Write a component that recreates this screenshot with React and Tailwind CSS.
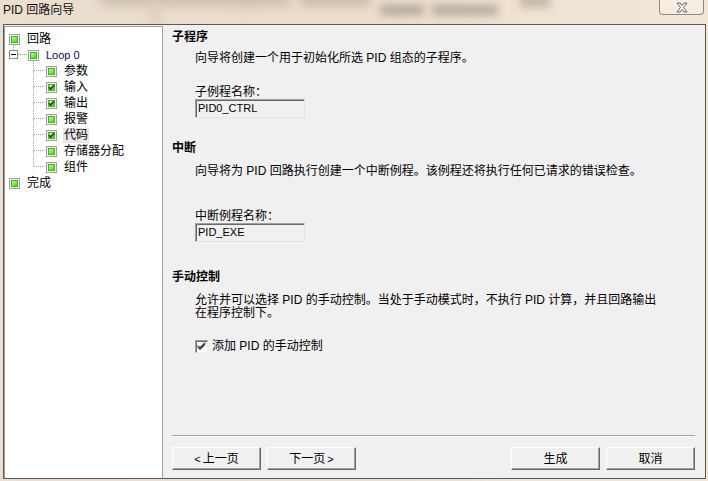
import React from "react";

function NodeIcon({ checked }) {
  return (
    <svg width="11" height="11" viewBox="0 0 11 11" className="block shrink-0">
      <rect x="0.5" y="0.5" width="10" height="10" fill="#fbfbfb" stroke="#a2a2a2" />
      <rect x="2" y="2" width="7" height="7" fill="url(#nodeGrad)" />
      <rect x="2.5" y="2.5" width="6" height="6" fill="none" stroke="#41b820" strokeWidth="1" />
      {checked && (
        <path d="M3 5.2 L4.6 7 L8.2 3.2" fill="none" stroke="#1c4a16" strokeWidth="1.6" />
      )}
    </svg>
  );
}

function TreeRow({ level, checked, children, selected, loop }) {
  const pad = level === 0 ? "pl-[4px]" : level === 1 ? "pl-[23px]" : "pl-[41px]";
  return (
    <div className={`h-[16px] flex items-center gap-[6px] ${pad}`}>
      <NodeIcon checked={checked} />
      <span
        className={`leading-[15px] whitespace-nowrap px-[1px] ${
          selected ? "bg-[#e6e6e6]" : ""
        } ${loop ? "text-[11px] text-[#0c0c5c]" : "text-[12px] text-black"}`}
      >
        {children}
      </span>
    </div>
  );
}

function Tree() {
  const childYs = [2, 3, 4, 5, 6, 7, 8].map((i) => 12 + 16 * i - 0.5);
  return (
    <div className="w-[159px] mt-[1px] shrink-0 bg-white border-t border-l border-r border-[#a0a0a0] relative">
      <svg
        width="60"
        height="160"
        className="absolute left-0 top-0 pointer-events-none"
        shapeRendering="crispEdges"
      >
        <line x1="8.5" y1="18" x2="8.5" y2="23" stroke="#a0a0a0" strokeDasharray="1 1" />
        <rect x="4.5" y="23.5" width="8" height="8" fill="#ffffff" stroke="#8f8f8f" />
        <line x1="6" y1="27.5" x2="11" y2="27.5" stroke="#000000" />
        <line x1="13" y1="27.5" x2="22" y2="27.5" stroke="#a0a0a0" strokeDasharray="1 1" />
        <line x1="28.5" y1="34" x2="28.5" y2="140" stroke="#a0a0a0" strokeDasharray="1 1" />
        {childYs.map((y) => (
          <line key={y} x1="29" y1={y} x2="40" y2={y} stroke="#a0a0a0" strokeDasharray="1 1" />
        ))}
      </svg>
      <div className="pt-[4px] flex flex-col relative">
        <TreeRow level={0}>回路</TreeRow>
        <TreeRow level={1} loop>
          Loop 0
        </TreeRow>
        <TreeRow level={2}>参数</TreeRow>
        <TreeRow level={2} checked>
          输入
        </TreeRow>
        <TreeRow level={2} checked>
          输出
        </TreeRow>
        <TreeRow level={2}>报警</TreeRow>
        <TreeRow level={2} checked selected>
          代码
        </TreeRow>
        <TreeRow level={2}>存储器分配</TreeRow>
        <TreeRow level={2}>组件</TreeRow>
        <TreeRow level={0}>完成</TreeRow>
      </div>
    </div>
  );
}

function ReadOnlyInput({ value }) {
  return (
    <div className="ml-[23px] w-[110px] h-[19px] bg-[#f0f0f0] border border-t-[#a0a0a0] border-l-[#a0a0a0] border-r-[#e3e3e3] border-b-[#e3e3e3] shadow-[inset_1px_1px_0_#696969] flex items-center pl-[2px] text-[11px] leading-[13px] text-black">
      {value}
    </div>
  );
}

function WinButton({ children }) {
  return (
    <div className="w-[89px] h-[23px] bg-[#f0f0f0] border border-t-white border-l-white border-r-[#696969] border-b-[#696969] shadow-[inset_-1px_-1px_0_#a0a0a0] flex items-center justify-center text-[12px] leading-[14px] text-black whitespace-nowrap">
      {children}
    </div>
  );
}

function CheckBox() {
  return (
    <svg width="13" height="13" viewBox="0 0 13 13" className="block shrink-0" shapeRendering="crispEdges">
      <rect x="0" y="0" width="13" height="13" fill="#ffffff" />
      <path d="M0.5 12.5 V0.5 H12.5" fill="none" stroke="#a0a0a0" />
      <path d="M1.5 11.5 V1.5 H11.5" fill="none" stroke="#696969" />
      <path d="M12.5 0.5 V12.5 H0.5" fill="none" stroke="#f0f0f0" />
      <path d="M3 5.5 L5 7.5 L10 2.5 M3 6.5 L5 8.5 L10 3.5 M3 7.5 L5 9.5 L10 4.5" fill="none" stroke="#000000" shapeRendering="auto" strokeWidth="1" />
    </svg>
  );
}

export default function App() {
  return (
    <div className="w-[708px] h-[481px] overflow-hidden flex flex-col bg-[linear-gradient(90deg,#ebdfcf_0%,#e9dcc9_35%,#ecdfcc_60%,#f1e5d5_85%,#f3e7d8_100%)] font-[family-name:'Liberation_Sans','Noto_Sans_CJK_SC',sans-serif] text-black">
      <svg width="0" height="0" className="absolute">
        <defs>
          <linearGradient id="nodeGrad" x1="0" y1="0" x2="1" y2="1">
            <stop offset="0" stopColor="#d4ffb0" />
            <stop offset="0.45" stopColor="#86f04e" />
            <stop offset="1" stopColor="#3cc21c" />
          </linearGradient>
        </defs>
      </svg>

      {/* Title bar */}
      <div className="h-[24px] shrink-0 relative flex items-start justify-between overflow-hidden">
        <div className="absolute left-[100px] top-[-6px] w-[190px] h-[12px] bg-[#c4b8a7] blur-[5px] opacity-80 pointer-events-none" />
        <div className="absolute left-[300px] top-[-6px] w-[70px] h-[12px] bg-[#c0b4a3] blur-[5px] opacity-80 pointer-events-none" />
        <div className="absolute left-[380px] top-[5px] w-[44px] h-[10px] bg-[#a49a8b] blur-[4px] opacity-80 pointer-events-none" />
        <div className="absolute left-[432px] top-[5px] w-[66px] h-[10px] bg-[#a69c8d] blur-[4px] opacity-80 pointer-events-none" />
        <div className="absolute left-[520px] top-[-5px] w-[30px] h-[12px] bg-[#b4a896] blur-[5px] opacity-80 pointer-events-none" />
        <div className="absolute left-[150px] top-[0px] w-[10px] h-[24px] bg-[#dccfbc] blur-[4px] pointer-events-none" />
        <span className="relative pl-[3px] pt-[2px] text-[12px] leading-[16px] text-[#111111] whitespace-nowrap">
          PID 回路向导
        </span>
        <div className="relative mr-[4px] w-[45px] h-[15px] rounded-b-[4px] border border-t-0 border-[#8e8880] bg-[linear-gradient(180deg,rgba(255,255,255,0.35),rgba(255,255,255,0.15))] flex items-center justify-center">
          <svg width="12" height="11" viewBox="0 0 12 11" className="block">
            <path
              d="M1 1 H4 L6 3.5 L8 1 H11 L7.6 5.5 L11 10 H8 L6 7.5 L4 10 H1 L4.4 5.5 Z"
              fill="#ffffff"
              stroke="#5d6270"
              strokeWidth="1"
              strokeLinejoin="round"
            />
          </svg>
        </div>
      </div>

      {/* Window body */}
      <div className="flex-1 min-h-0 ml-[3px] mr-[2px] mb-[2px] border border-[#5c5752] bg-[#f0f0f0] flex">
        <Tree />
        <div className="flex-1 flex flex-col pl-[9px] pr-[10px] pt-[4px] pb-[8px] min-w-0">
          <div className="text-[12px] font-bold leading-[16px]">子程序</div>
          <div className="mt-[5px] pl-[23px] text-[12px] leading-[16px] whitespace-nowrap">
            向导将创建一个用于初始化所选 PID 组态的子程序。
          </div>
          <div className="mt-[19px] pl-[23px] text-[12px] leading-[14px]">子例程名称：</div>
          <ReadOnlyInput value="PID0_CTRL" />

          <div className="mt-[22px] text-[12px] font-bold leading-[16px]">中断</div>
          <div className="mt-[7px] pl-[23px] text-[12px] leading-[16px] whitespace-nowrap">
            向导将为 PID 回路执行创建一个中断例程。该例程还将执行任何已请求的错误检查。
          </div>
          <div className="mt-[30px] pl-[23px] text-[12px] leading-[14px]">中断例程名称：</div>
          <ReadOnlyInput value="PID_EXE" />

          <div className="mt-[27px] text-[12px] font-bold leading-[16px]">手动控制</div>
          <div className="mt-[9px] pl-[23px] text-[12px] leading-[13px]">
            <div className="whitespace-nowrap">
              允许并可以选择 PID 的手动控制。当处于手动模式时，不执行 PID 计算，并且回路输出
            </div>
            <div className="whitespace-nowrap">在程序控制下。</div>
          </div>
          <div className="mt-[18px] pl-[23px] h-[16px] flex items-center gap-[4px]">
            <CheckBox />
            <span className="text-[12px] leading-[14px] whitespace-nowrap">添加 PID 的手动控制</span>
          </div>

          <div className="mt-auto">
            <div className="h-[1px] bg-[#a0a0a0]" />
            <div className="h-[1px] bg-white" />
            <div className="mt-[10px] flex items-center">
              <div className="flex gap-[6px]">
                <WinButton>
                  <span className="text-[11px] mr-[2px]">&lt;</span>上一页
                </WinButton>
                <WinButton>
                  下一页<span className="text-[11px] ml-[2px]">&gt;</span>
                </WinButton>
              </div>
              <div className="ml-auto flex gap-[6px]">
                <WinButton>生成</WinButton>
                <WinButton>取消</WinButton>
              </div>
            </div>
          </div>
        </div>
      </div>
    </div>
  );
}
